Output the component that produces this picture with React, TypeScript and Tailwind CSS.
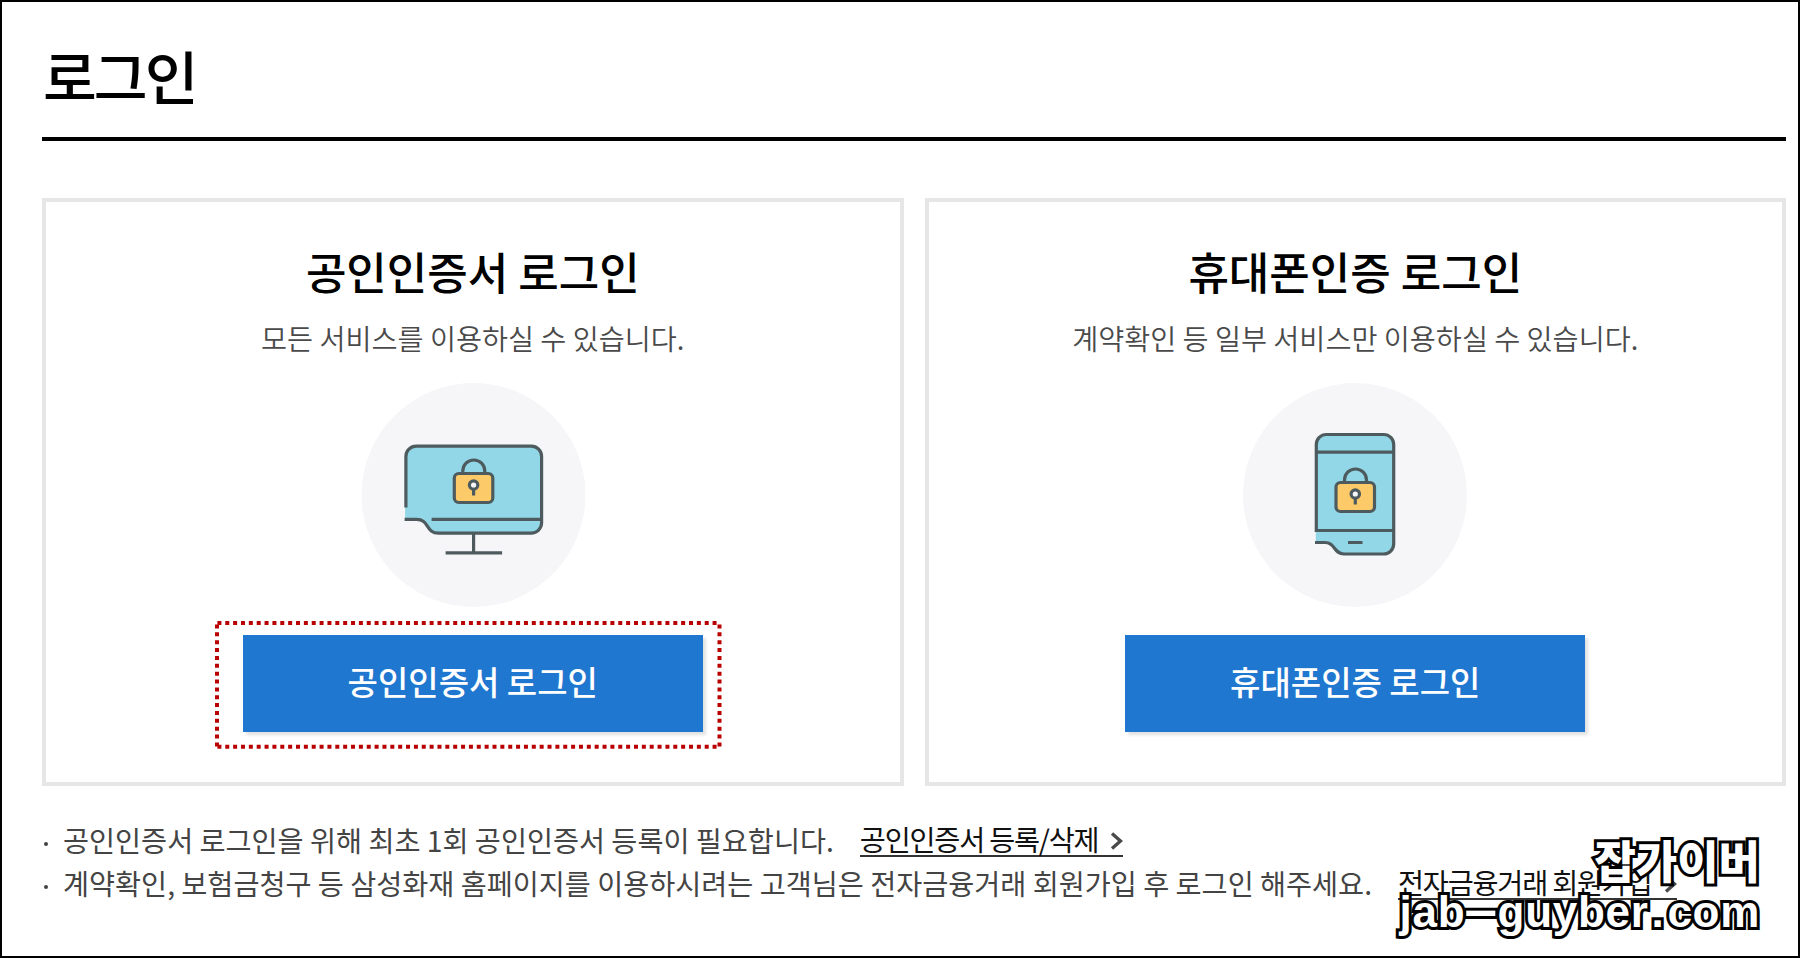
import type { ReactNode } from "react";

interface LoginCardProps {
  title: string;
  description: string;
  icon: ReactNode;
  highlighted?: boolean;
}

interface NoteProps {
  text: string;
  link: string;
}

function Lock({ x, y }: { x: number; y: number }) {
  return (
    <g transform={`translate(${x} ${y})`}>
      <path d="M9.5 14V11.5a11 11 0 0 1 22 0V14" fill="none" />
      <rect x="1" y="14" width="38.5" height="29" rx="4.5" fill="#fdca69" />
      <path d="M20.3 30v6" />
      <circle cx="20.3" cy="25.5" r="4.2" fill="#f6f6f9" />
    </g>
  );
}

function MonitorIcon() {
  return (
    <svg viewBox="0 0 224 224" className="size-56" stroke="#4d5b5f" strokeWidth="3.2" fill="none">
      <circle cx="112.5" cy="112" r="112" fill="#f6f6f9" stroke="none" />
      <g transform="translate(0.6 -0.5)">
        <path
          d="M43.5 137V74A10.3 10.3 0 0 1 54.6 63.7H169.7A10.3 10.3 0 0 1 180 74v66.3a10.3 10.3 0 0 1-10.3 10.3H77c-13.500 0-9-13.7-22-13.7z"
          fill="#92d7e7"
          stroke="none"
        />
        <path d="M44.3 125V74A10.3 10.3 0 0 1 54.6 63.7H169.7A10.3 10.3 0 0 1 180 74v66.3a10.3 10.3 0 0 1-10.3 10.3H77c-13.500 0-9-13.7-22-13.7H43" />
        <path d="M70 136.9h110M112 151v19M84 170.4h56.5" />
        <Lock x={91.7} y={77} />
      </g>
    </svg>
  );
}

function PhoneIcon() {
  return (
    <svg viewBox="0 0 224 224" className="size-56" stroke="#4d5b5f" strokeWidth="3.2" fill="none">
      <circle cx="112" cy="112" r="112" fill="#f6f6f9" stroke="none" />
      <g transform="translate(0 -0.5)">
        <path
          d="M72.8 160V62A10 10 0 0 1 83 52h57.7a10 10 0 0 1 10 10v99.5a10 10 0 0 1-10 10H101c-10.5 0-8.5-11.5-19-11.5z"
          fill="#92d7e7"
          stroke="none"
        />
        <path d="M73.3 149.5V62A10 10 0 0 1 83.3 52h57.4a10 10 0 0 1 10 10v99.5a10 10 0 0 1-10 10H101c-10.5 0-8.5-11.5-19-11.5h-10" />
        <path d="M73.3 69.7h77.4M73.3 148h77.4M105 160h14.5" />
        <Lock x={92} y={86} />
      </g>
    </svg>
  );
}

// dotted marker drawn around the recommended button
function DottedFrame() {
  return (
    <svg
      viewBox="0 0 507 130"
      className="pointer-events-none absolute -top-[15px] -left-[28px] h-[130px] w-[507px] max-w-none"
      stroke="#b90000"
      strokeWidth="4"
      strokeDasharray="4 3.86"
    >
      <path d="M2.4 2.9H505M2.4 126.8H505" />
      <path d="M2 4.5V127M504.5 4.5V127" />
    </svg>
  );
}

function LoginCard({ title, description, icon, highlighted }: LoginCardProps) {
  return (
    <section className="flex h-[588px] flex-1 flex-col items-center border-4 border-[#e6e6e6] pt-[45px]">
      <h2 className="text-[44px] leading-[48px] font-medium text-black">{title}</h2>
      <p className="mt-[23px] text-[28.3px] leading-10 font-[350] text-[#4a4a4a]">{description}</p>
      <div className="mt-[25px]">{icon}</div>
      <div className="relative mt-7">
        <button className="flex h-[97px] w-[460px] items-center justify-center bg-[#1f77d0] pb-[3px] text-[33px] font-medium text-white shadow-[3px_3px_3px_rgba(0,0,0,0.12)]">
          {title}
        </button>
        {highlighted && <DottedFrame />}
      </div>
    </section>
  );
}

function Note({ text, link }: NoteProps) {
  return (
    <li className="flex h-[43px] items-center text-[28.3px] leading-[43px] whitespace-nowrap text-[#444]">
      <span className="mt-2 mr-[15px] ml-[2px] size-1 rounded-full bg-[#444]" />
      <span>{text}</span>
      <a className="ml-[26px] flex h-[35px] items-center border-b-2 border-[#333] text-[#111]">
        <span className="tracking-[-1.2px]">{link}</span>
        <svg viewBox="0 0 13 18" className="mt-1 ml-3 h-[18px] w-[13px]" fill="none" stroke="#4a4a4a" strokeWidth="3.4">
          <path d="M2 1.5 10.5 9 2 16.5" />
        </svg>
      </a>
    </li>
  );
}

export default function App() {
  return (
    <div className="relative h-[958px] w-[1800px] overflow-hidden border-2 border-black bg-white pt-11 pr-3 pl-10 font-['Noto_Sans_CJK_KR',sans-serif]">
      <h1 className="h-[95px] border-b-4 border-black pl-px text-[58.5px] leading-[58px] font-medium tracking-[-3px] text-black">
        로그인
      </h1>

      <main className="mt-[57px] flex gap-[21px]">
        <LoginCard
          title="공인인증서 로그인"
          description="모든 서비스를 이용하실 수 있습니다."
          icon={<MonitorIcon />}
          highlighted
        />
        <LoginCard
          title="휴대폰인증 로그인"
          description="계약확인 등 일부 서비스만 이용하실 수 있습니다."
          icon={<PhoneIcon />}
        />
      </main>

      <ul className="mt-8">
        <Note
          text="공인인증서 로그인을 위해 최초 1회 공인인증서 등록이 필요합니다."
          link="공인인증서 등록/삭제"
        />
        <Note
          text="계약확인, 보험금청구 등 삼성화재 홈페이지를 이용하시려는 고객님은 전자금융거래 회원가입 후 로그인 해주세요."
          link="전자금융거래 회원가입"
        />
      </ul>

      <div className="absolute right-[38px] bottom-[20px] isolate flex flex-col items-end font-['Liberation_Sans','Noto_Sans_CJK_KR',sans-serif] text-[44px] leading-[48px] font-bold whitespace-nowrap text-white [paint-order:stroke_fill] [stroke-linejoin:round] [-webkit-text-stroke:6px_#000]">
        <span className="text-[45px] font-black">잡가이버</span>
        <span className="tracking-[0.7px]">
          jab
          <span className="relative -z-10 mr-[8px] ml-[9px] inline-block -translate-y-[2px] scale-x-[2.6]">
            -
          </span>
          guyber
          <span className="mx-[3px]">.</span>com
        </span>
      </div>
    </div>
  );
}
